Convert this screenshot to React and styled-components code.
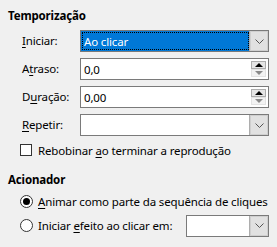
import React from 'react';
import styled, { createGlobalStyle } from 'styled-components';

const GlobalStyle = createGlobalStyle`
    html, body {
        margin:0;
        padding:0;
        background:#f0f0f0;
    }
    body {
        font-family: "Noto Sans", "Liberation Sans", sans-serif;
        font-size:11.5px;
        letter-spacing:-0.15px;
        color:#000;
        white-space:nowrap;
    }
`

const Page = styled.div`
    width:277px;
    height:247px;
    box-sizing:border-box;
    padding: 8px 8px 0 8px;
    display:flex;
    flex-direction:column;
    overflow:hidden;
`

const Heading = styled.div`
    font-weight:bold;
    height:16px;
    line-height:16px;
    margin-top:${({ top }) => top || 0}px;
    margin-bottom:${({ space }) => space || 6}px;
`

const Form = styled.div`
    display:grid;
    grid-template-columns: 58px 189px;
    row-gap:6px;
    padding-left:14px;
    align-items:center;
`

const Label = styled.div`
    line-height:16px;
`

const Key = styled.span`
    text-decoration:underline;
    text-underline-offset:2px;
`

const Field = styled.div`
    height:22px;
    box-sizing:border-box;
    border:1px solid #7a7a7a;
    background:${({ focused }) => focused ? '#0078d7' : 'white'};
    color:${({ focused }) => focused ? 'white' : 'black'};
    display:flex;
    align-items:center;
    padding-left:${({ focused }) => focused ? '1px' : '3px'};
    width:${({ width }) => width || 'auto'};
    flex-shrink:0;
`

const FocusText = styled.div`
    flex:1;
    align-self:stretch;
    display:flex;
    align-items:center;
    padding-left:2px;
    outline:1px dotted #000;
    outline-offset:-1px;
    margin:1px 0;
`

const Value = styled.div`
    flex:1;
`

const DropButton = styled.div`
    width:18px;
    align-self:stretch;
    background:#e1e1e1;
    border-left:1px solid #adadad;
    box-shadow: inset 0 0 0 1px #cfcfcf;
    display:flex;
    align-items:center;
    justify-content:center;
`

const Spin = styled.div`
    width:15px;
    margin-right:2px;
    display:flex;
    flex-direction:column;
`

const SpinButton = styled.div`
    height:8px;
    box-sizing:border-box;
    border:1px solid ${({ active }) => active ? '#adadad' : '#e3e3e3'};
    background:${({ active }) => active ? '#e5e5e5' : '#f3f3f3'};
    display:flex;
    align-items:center;
    justify-content:center;
`

const Tri = styled.div`
    width:0;
    height:0;
    border-left:4px solid transparent;
    border-right:4px solid transparent;
    ${({ up }) => up ? 'border-bottom:4px solid #000;' : 'border-top:4px solid #8a8a8a;'}
`

const CheckRow = styled.div`
    display:flex;
    align-items:center;
    gap:6px;
    padding-left:12px;
    height:16px;
    margin-top:6px;
`

const Box = styled.span`
    width:12px;
    height:12px;
    box-sizing:border-box;
    border:1px solid #333;
    background:white;
    flex-shrink:0;
`

const RadioList = styled.div`
    display:flex;
    flex-direction:column;
    gap:5px;
    padding-left:12px;
`

const RadioRow = styled.div`
    display:flex;
    align-items:center;
    gap:5px;
    height:${({ tall }) => tall ? '23px' : '16px'};
`

const Radio = styled.span`
    width:13px;
    height:13px;
    flex-shrink:0;
    box-sizing:border-box;
    border-radius:50%;
    border:1px solid #333;
    background:white;
    display:flex;
    align-items:center;
    justify-content:center;
    &::after{
        content:'';
        width:7px;
        height:7px;
        border-radius:50%;
        background:${({ checked }) => checked ? '#000' : 'transparent'};
    }
`

const Spacer = styled.div`
    flex:1;
`

function Chevron() {
    return (
        <svg width="9" height="5" viewBox="0 0 9 5">
            <path d="M0.5 0.5 L4.5 4.5 L8.5 0.5" fill="none" stroke="#555" strokeWidth="1" />
        </svg>
    )
}

function SpinField({ value }) {
    return (
        <Field>
            <Value>{value}</Value>
            <Spin>
                <SpinButton active><Tri up /></SpinButton>
                <SpinButton><Tri /></SpinButton>
            </Spin>
        </Field>
    )
}

export default function App() {
    return (
        <Page>
            <GlobalStyle />
            <Heading space={6}>Temporização</Heading>
            <Form>
                <Label><Key>I</Key>niciar:</Label>
                <Field focused>
                    <FocusText>Ao clicar</FocusText>
                    <DropButton><Chevron /></DropButton>
                </Field>

                <Label>A<Key>t</Key>raso:</Label>
                <SpinField value="0,0" />

                <Label>D<Key>u</Key>ração:</Label>
                <SpinField value="0,00" />

                <Label><Key>R</Key>epetir:</Label>
                <Field>
                    <Value />
                    <DropButton><Chevron /></DropButton>
                </Field>
            </Form>
            <CheckRow>
                <Box />
                <span>Rebobinar <Key>a</Key>o terminar a reprodução</span>
            </CheckRow>
            <Heading top={14} space={5}>Acionador</Heading>
            <RadioList>
                <RadioRow>
                    <Radio checked />
                    <span><Key>A</Key>nimar como parte da sequência de cliques</span>
                </RadioRow>
                <RadioRow tall>
                    <Radio />
                    <span>Iniciar <Key>e</Key>feito ao clicar em:</span>
                    <Spacer />
                    <Field width="83px">
                        <Value />
                        <DropButton><Chevron /></DropButton>
                    </Field>
                </RadioRow>
            </RadioList>
        </Page>
    )
}
